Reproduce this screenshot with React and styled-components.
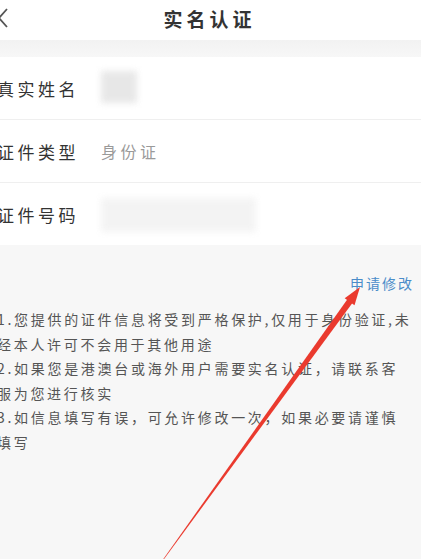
import React from "react";
import styled, { createGlobalStyle } from "styled-components";

const GlobalStyle = createGlobalStyle`
  html, body {
    margin: 0;
    padding: 0;
    background: #f7f7f7;
    overflow: hidden;
  }
  body {
    font-family: "Noto Sans CJK SC", "Noto Sans", sans-serif;
  }
`;

const rows = [
  { label: "真实姓名", kind: "name" },
  { label: "证件类型", value: "身份证" },
  { label: "证件号码", kind: "id" },
];

const notes = [
  ["1.您提供的证件信息将受到严格保护,仅用于身份验证,未", "经本人许可不会用于其他用途"],
  ["2.如果您是港澳台或海外用户需要实名认证，请联系客", "服为您进行核实"],
  ["3.如信息填写有误，可允许修改一次，如果必要请谨慎", "填写"],
];

const App = () => (
  <>
    <GlobalStyle />
    <Page>
      <Header>
        <Back>
          <svg width="14" height="22" viewBox="0 0 14 22">
            <path d="M11 2 L3 11 L11 20" fill="none" stroke="#555" strokeWidth="1.8" />
          </svg>
        </Back>
        <Title>实名认证</Title>
      </Header>
      <Gap />
      <List>
        {rows.map((r) => (
          <Row key={r.label}>
            <Label>{r.label}</Label>
            {r.value && <Value>{r.value}</Value>}
            {r.kind && <Masked $kind={r.kind} />}
          </Row>
        ))}
      </List>
      <Notes>
        <EditLink>申请修改</EditLink>
        {notes.map((lines, i) => (
          <Note key={i}>
            {lines.map((l) => (
              <NoteLine key={l}>{l}</NoteLine>
            ))}
          </Note>
        ))}
      </Notes>
      <Arrow width="421" height="559" viewBox="0 0 421 559">
        <polygon
          points="162.2,560.6 163.8,559.4 352.6,302.8 347.4,299.2"
          fill="#ea3a2e"
        />
        <polygon points="360,287 354.5,305.2 344.7,298.2" fill="#ea3a2e" />
      </Arrow>
    </Page>
  </>
);

const Page = styled.div`
  position: relative;
  width: 425px;
  height: 559px;
  margin-left: -4px;
  background: #f7f7f7;
  overflow: hidden;
`;

const Header = styled.div`
  height: 40px;
  background: #fff;
  display: flex;
  align-items: center;
  justify-content: center;
  position: relative;
`;

const Back = styled.div`
  position: absolute;
  left: 0;
  top: 7px;
`;

const Title = styled.div`
  font-size: 19px;
  font-weight: 700;
  letter-spacing: 4px;
  color: #333;
  margin-left: 2px;
  margin-top: -3px;
`;

const Gap = styled.div`
  height: 17px;
  background: linear-gradient(#f2f2f2, #f7f7f7);
`;

const List = styled.div`
  background: #fff;
`;

const Row = styled.div`
  height: 62px;
  display: flex;
  align-items: center;
  border-bottom: 1px solid #efefef;
  &:last-child {
    border-bottom: none;
  }
`;

const Label = styled.div`
  width: 104px;
  padding-left: 1px;
  font-size: 17px;
  letter-spacing: 3.5px;
  color: #333;
`;

const Value = styled.div`
  font-size: 16px;
  letter-spacing: 3.5px;
  color: #9a9a9a;
`;

const Masked = styled.div`
  width: ${(p) => (p.$kind === "name" ? "36px" : "155px")};
  height: ${(p) => (p.$kind === "name" ? "32px" : "34px")};
  margin-top: ${(p) => (p.$kind === "name" ? "-2px" : "2px")};
  background: ${(p) => (p.$kind === "name" ? "#e2e2e2" : "#f1f1f1")};
  filter: blur(3px);
  opacity: 0.8;
`;

const Notes = styled.div`
  display: flex;
  flex-direction: column;
  padding: 28px 7px 0 1px;
`;

const EditLink = styled.div`
  align-self: flex-end;
  font-size: 14px;
  letter-spacing: 2px;
  color: #4a8cc9;
  margin-bottom: 14px;
`;

const Note = styled.div`
  font-size: 14px;
  letter-spacing: 2.7px;
  line-height: 24.6px;
  color: #555;
`;

const NoteLine = styled.div`
  white-space: nowrap;
`;

const Arrow = styled.svg`
  position: absolute;
  left: 4px;
  top: 0;
  pointer-events: none;
`;

export default App;
